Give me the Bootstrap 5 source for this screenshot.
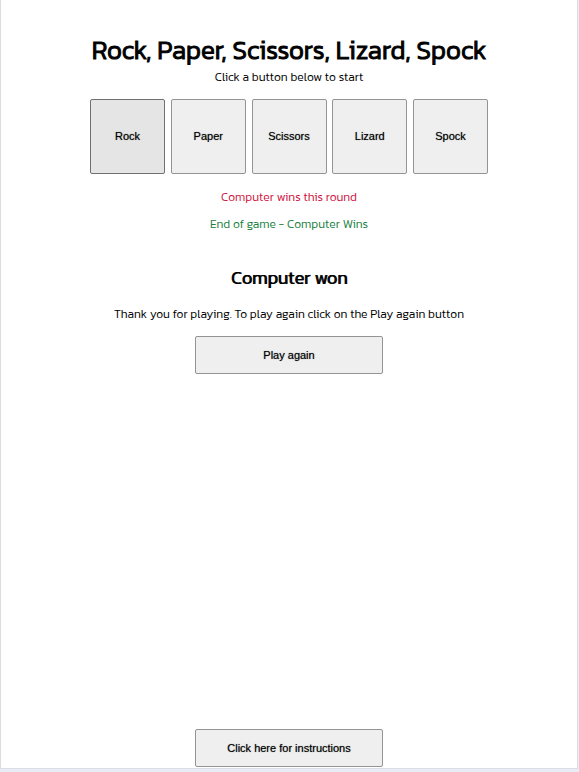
<!DOCTYPE html>
<html lang="en">
<head>
<meta charset="utf-8">
<meta name="viewport" content="width=device-width, initial-scale=1">
<title>Rock, Paper, Scissors, Lizard, Spock</title>
<link rel="stylesheet" href="https://cdn.jsdelivr.net/npm/bootstrap@5.3.0/dist/css/bootstrap.min.css">
<style>
body { background: #e9ecf4; color: #000; font: 300 12px/18px Kanit, "Open Sans", sans-serif; }
.game-frame { background: #fff; border: 1px solid #dcdde4; border-top: 0; margin: 0 1px 3px 0; padding: 32px 0 1px; }
.game-title { font-size: 26px; line-height: 36px; font-weight: 300; -webkit-text-stroke: 1px #000; }
.choices { width: 398px; max-width: 100%; margin: 13px 0 14px; }
.game-btn { background: #efefef; border: 1px solid #949494; border-radius: 2px; color: #000; font: 400 11px/16px "Liberation Sans", Arial, sans-serif; text-shadow: 0 0 1px #0008; padding: 0; }
.game-btn:hover, .game-btn.chosen { background: #e5e5e5; border-color: #707070; }
.choice { width: 75px; height: 75px; padding-bottom: 1px; }
.wide { width: 188px; height: 38px; }
.round-result { color: #d0103c; margin-bottom: 9px; }
.game-result { color: #198040; margin-bottom: 32px; }
.winner { font-size: 18px; line-height: 26px; font-weight: 300; text-shadow: 1px 0 0 #000; margin-bottom: 14px; }
.thanks { margin-bottom: 13px; }
</style>
</head>
<body>
<div class="d-flex flex-column min-vh-100">
<main class="game-frame flex-grow-1 d-flex flex-column align-items-center text-center">
  <h1 class="game-title mb-0">Rock, Paper, Scissors, Lizard, Spock</h1>
  <p class="mb-0">Click a button below to start</p>
  <div class="choices d-flex justify-content-between">
    <button type="button" class="game-btn choice chosen">Rock</button>
    <button type="button" class="game-btn choice">Paper</button>
    <button type="button" class="game-btn choice">Scissors</button>
    <button type="button" class="game-btn choice">Lizard</button>
    <button type="button" class="game-btn choice">Spock</button>
  </div>
  <p class="round-result">Computer wins this round</p>
  <p class="game-result">End of game - Computer Wins</p>
  <h2 class="winner">Computer won</h2>
  <p class="thanks">Thank you for playing. To play again click on the Play again button</p>
  <button type="button" class="game-btn wide">Play again</button>
  <button type="button" class="game-btn wide mt-auto">Click here for instructions</button>
</main>
</div>
<script src="https://cdn.jsdelivr.net/npm/bootstrap@5.3.0/dist/js/bootstrap.bundle.min.js"></script>
</body>
</html>
